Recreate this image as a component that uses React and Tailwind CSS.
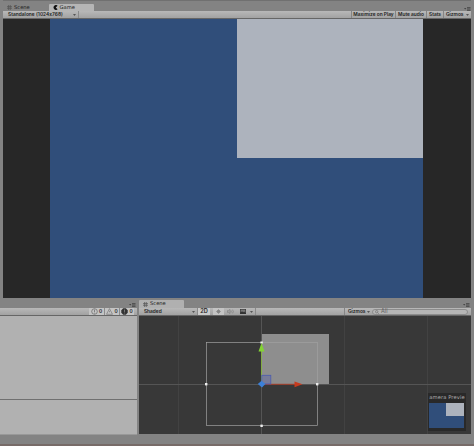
import React from 'react';

function PanelMenu() {
  return (
    <svg className="h-[4px] w-[7px]" viewBox="0 0 7 4" fill="#444">
      <path d="M0 1h2.4L1.2 2.6z" />
      <path d="M3 .2h3.5v.8H3zM3 1.6h3.5v.8H3zM3 3h3.5v.8H3z" />
    </svg>
  );
}

function SceneIcon() {
  return (
    <svg className="h-[5px] w-[5px]" viewBox="0 0 5 5" stroke="#555" strokeWidth=".7">
      <path d="M1.6 0v5M3.3 0v5M0 1.6h5M0 3.3h5" />
    </svg>
  );
}

function GameIcon() {
  return (
    <svg className="h-[5px] w-[5px]" viewBox="0 0 5 5">
      <path d="M4.6.7A2.4 2.4 0 1 0 4.6 4.3L2.7 2.5z" fill="#111" />
    </svg>
  );
}

function Caret() {
  return (
    <svg className="h-[2px] w-[3px] shrink-0" viewBox="0 0 3 2" fill="#555">
      <path d="M0 0h3L1.5 2z" />
    </svg>
  );
}

const toolbar =
  'flex shrink-0 items-center border-b border-[#666] bg-linear-to-b from-[#b8b8b8] to-[#a2a2a2]';

const tabText = "font-['DejaVu_Sans',sans-serif] text-[5.2px] font-normal";

function GamePanel() {
  return (
    <section className="flex h-[298px] shrink-0 flex-col pl-[3px] pr-[3px]">
      <div className="flex h-[11px] shrink-0 items-end border-t border-[#707070]">
        <div className={`${tabText} flex h-[7px] w-[46px] items-center gap-[2px] pl-[4px]`}>
          <SceneIcon />
          <span>Scene</span>
        </div>
        <div className={`${tabText} flex h-[7px] w-[45px] items-center gap-[1.5px] rounded-t-[1px] bg-[#b5b5b5] pl-[4px]`}>
          <GameIcon />
          <span>Game</span>
        </div>
        <div className="ml-auto">
          <PanelMenu />
        </div>
      </div>
      <div className={`${toolbar} h-[8px]`}>
        <div className="flex h-full w-[76px] items-center justify-between border-r border-[#8a8a8a] pl-[5px] pr-[2px]">
          <span className="tracking-[0.05px]">Standalone (1024x768)</span>
          <Caret />
        </div>
        <div className="ml-auto flex h-full items-center">
          <span className="flex h-full w-[44px] items-center justify-center border-l border-[#858585]">Maximize on Play</span>
          <span className="flex h-full w-[31px] items-center justify-center border-l border-[#858585]">Mute audio</span>
          <span className="flex h-full w-[17px] items-center justify-center border-l border-[#858585]">Stats</span>
          <span className="flex h-full w-[28px] items-center gap-[3px] border-l border-[#858585] pl-[2px]">
            Gizmos
            <Caret />
          </span>
        </div>
      </div>
      <div className="flex min-h-0 flex-1 justify-center bg-[#272727] pr-[1px]">
        <div className="flex h-full w-[373px] items-start justify-end bg-[#304e7a]">
          <div className="h-[139px] w-[186px] bg-[#adb3bd]" />
        </div>
      </div>
    </section>
  );
}

function Console() {
  return (
    <section className="flex w-[137px] shrink-0 flex-col">
      <div className="flex h-[10px] shrink-0 items-end justify-end pb-[1px] pr-[1px]">
        <PanelMenu />
      </div>
      <div className={`${toolbar} h-[8px] justify-end`}>
        <div className="flex h-full w-[15px] items-center justify-center gap-[1px] bg-[#c4c4c4]">
          <svg className="h-[7px] w-[7px]" viewBox="0 0 7 7" fill="none" stroke="#666" strokeWidth=".7">
            <circle cx="3.5" cy="3.5" r="2.8" />
            <path d="M3.5 1.6v2.6M3.5 4.8v.7" />
          </svg>
          0
        </div>
        <div className="flex h-full w-[15px] items-center justify-center gap-[1px] border-l border-[#8c8c8c] bg-[#c4c4c4]">
          <svg className="h-[7px] w-[7px]" viewBox="0 0 7 7" fill="none" stroke="#777" strokeWidth=".7">
            <path d="M3.5.6 6.5 6.3H.5zM3.5 2.8v1.5" />
          </svg>
          0
        </div>
        <div className="mr-[3px] flex h-full w-[15px] items-center justify-center gap-[1px] border-l border-[#8c8c8c] bg-[#c4c4c4]">
          <svg className="h-[7px] w-[7px]" viewBox="0 0 7 7">
            <path d="M2.2.3h2.6L6.7 2.2v2.6L4.8 6.7H2.2L.3 4.8V2.2z" fill="#333" />
            <path d="M3.5 1.5v2.4M3.5 4.6v.8" stroke="#999" strokeWidth=".7" />
          </svg>
          0
        </div>
      </div>
      <div className="h-[83px] shrink-0 bg-[#b1b1b1]" />
      <div className="h-[36px] shrink-0 border-t border-b border-t-[#707070] border-b-[#999] bg-[#b1b1b1]" />
    </section>
  );
}

function Viewport() {
  return (
    <div className="relative h-[118px] w-[332px] shrink-0 overflow-hidden bg-[#383838]">
      <svg className="absolute inset-0 h-[118px] w-[332px]" viewBox="139 316 332 118">
        {/* grid */}
        <path d="M178.5 316v118M344.5 316v118M427.5 316v118" stroke="#424242" />
        <path d="M261.5 316v118M139 384.5h332" stroke="#555" />
        <rect x="262" y="334" width="67" height="50" fill="#8e8e8e" />
        {/* camera frustum and its handles */}
        <rect x="206.5" y="342.5" width="111" height="83" fill="none" stroke="#a2a2a2" strokeWidth=".7" />
        <g fill="#ededed">
          <rect x="205" y="383" width="2.4" height="2.4" />
          <rect x="316" y="383" width="2.4" height="2.4" />
          <rect x="260.4" y="424.6" width="2.4" height="2.4" />
          <rect x="260.4" y="341.5" width="2.4" height="2" />
        </g>
        {/* move gizmo */}
        <path d="M261.5 384v-33" stroke="#83ad42" />
        <path d="M258.5 351.5 261.5 343l3 8.5z" fill="#83d334" />
        <path d="M262 384.3h33" stroke="#a33b26" />
        <path d="M294.5 381.4 302.5 384.3l-8 2.9z" fill="#c63b1f" />
        <rect x="261.8" y="375.3" width="9" height="8.7" fill="#6f749c" fillOpacity=".75" stroke="#4b5bb0" strokeWidth=".8" />
        <path d="m257.8 384 3.8-3.2 3.8 3.2-3.4 3.6z" fill="#3c80d8" />
      </svg>
      <div className="absolute left-[289px] top-[77px] h-[38px] w-[38px] bg-[#292929]">
        <div className="flex h-[10px] w-full items-center justify-center whitespace-nowrap font-['DejaVu_Sans',sans-serif] text-[5.2px] font-normal tracking-[0.1px] text-[#b0b0b0]">
          amera Previe
        </div>
        <div className="ml-[1px] flex h-[25px] w-[35px] items-start justify-end bg-[#304e7a]">
          <div className="h-[13px] w-[18px] bg-[#adb3bd]" />
        </div>
      </div>
    </div>
  );
}

function ScenePanel() {
  return (
    <section className="flex w-[332px] shrink-0 flex-col">
      <div className="flex h-[10px] shrink-0 items-end">
        <div className={`${tabText} flex h-[8px] w-[45px] items-center gap-[2px] rounded-t-[1px] bg-[#b0b0b0] pl-[4px]`}>
          <SceneIcon />
          <span>Scene</span>
        </div>
        <div className="ml-auto pb-[1px] pr-[1px]">
          <PanelMenu />
        </div>
      </div>
      <div className={`${toolbar} h-[8px]`}>
        <div className="flex h-full w-[59px] items-center justify-between border-r border-[#8a8a8a] pl-[5px] pr-[2px]">
          <span>Shaded</span>
          <Caret />
        </div>
        <div className="flex h-full w-[12px] items-center justify-center bg-[#cbcbcb] text-[5.6px]">2D</div>
        <div className="ml-[3px] flex h-full w-[11px] items-center justify-center bg-[#c4c4c4]">
          <svg className="h-[5px] w-[5px]" viewBox="0 0 5 5">
            <circle cx="2.5" cy="2.5" r="1.7" fill="#808080" />
            <path d="M2.5 0v5M0 2.5h5" stroke="#888" strokeWidth=".6" />
          </svg>
        </div>
        <div className="flex h-full w-[12px] items-center justify-center">
          <svg className="h-[5px] w-[7px]" viewBox="0 0 7 5" fill="none" stroke="#777" strokeWidth=".6">
            <path d="M.4 1.7h1L3 .5v4L1.4 3.3h-1zM4.2 1.5v2M5.6.7q1.4 1.8 0 3.6" />
          </svg>
        </div>
        <div className="flex h-full w-[20px] items-center gap-[4px] border-r border-[#8a8a8a] pl-[4px]">
          <svg className="h-[5px] w-[6px]" viewBox="0 0 6 5">
            <path d="M0 0h6v5H0z" fill="#333" />
            <path d="M.6 3.6 2 2.2l1.2 1 .9-.7 1.3 1.2V.6H.6z" fill="#777" />
          </svg>
          <Caret />
        </div>
        <div className="ml-auto flex h-full w-[26px] items-center gap-[2px] border-l border-[#858585] pl-[3px]">
          Gizmos
          <Caret />
        </div>
        <div className="ml-[2px] mr-[3px] flex h-[6px] w-[96px] items-center gap-[1px] rounded-full border border-[#8c8c8c] bg-[#b5b5b5] pl-[2px] text-[5.5px] font-normal text-[#5c5c5c]">
          <svg className="h-[4px] w-[5px]" viewBox="0 0 5 4" fill="none" stroke="#666" strokeWidth=".6">
            <circle cx="1.7" cy="1.7" r="1.2" />
            <path d="m2.6 2.6 1.2 1.2" />
          </svg>
          <span>All</span>
        </div>
      </div>
      <Viewport />
    </section>
  );
}

export default function App() {
  return (
    <main className="flex h-[446px] w-[474px] flex-col overflow-hidden whitespace-nowrap bg-[#838383] font-['Inter','DejaVu_Sans',sans-serif] text-[4.8px] leading-none font-semibold text-[#222]">
      <GamePanel />
      <div className="flex flex-1 gap-[2px]">
        <Console />
        <ScenePanel />
      </div>
      <footer className="h-[2px] shrink-0 bg-[#776b68]" />
    </main>
  );
}
